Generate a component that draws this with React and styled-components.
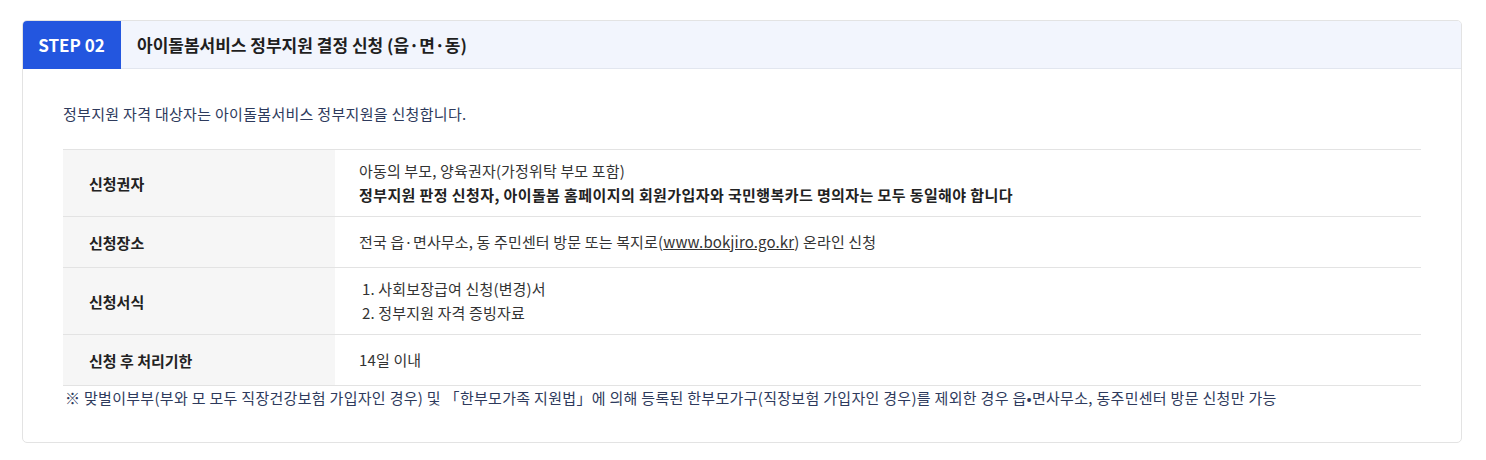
import React from 'react';
import styled, { createGlobalStyle } from 'styled-components';

const GlobalStyle = createGlobalStyle`
  body {
    margin: 0;
    background: #fff;
    font-family: "Noto Sans CJK KR", "Noto Sans", sans-serif;
    color: #333;
  }
`;

const Page = styled.div`
  padding: 20px 24px 17px 22px;
`;

const Card = styled.section`
  border: 1px solid #e3e3e3;
  border-radius: 5px;
  overflow: hidden;
  background: #fff;
`;

const Header = styled.header`
  display: flex;
  align-items: stretch;
  height: 47px;
  background: #f2f5fd;
  border-bottom: 1px solid #e2e6ef;
`;

const StepBadge = styled.div`
  display: flex;
  align-items: center;
  justify-content: center;
  width: 99px;
  margin: -1px 0 -1px -1px;
  background: #2356df;
  color: #fff;
  font-weight: 700;
  font-size: 17px;
`;

const Title = styled.h3`
  margin: 0;
  padding-left: 16px;
  display: flex;
  align-items: center;
  font-size: 17px;
  font-weight: 700;
  color: #1f1f1f;
`;

const Body = styled.div`
  padding: 33px 40px 32px;
`;

const Intro = styled.p`
  margin: 0 0 23px;
  font-size: 15px;
  line-height: 24px;
  color: #2e3a5c;
  letter-spacing: 0.3px;
`;

const Table = styled.div`
  border-top: 1px solid #e3e3e3;
`;

const Row = styled.div`
  display: grid;
  grid-template-columns: 272px 1fr;
  border-bottom: 1px solid #e3e3e3;
`;

const Label = styled.div`
  display: flex;
  align-items: center;
  min-height: 50px;
  padding: 0 26px;
  background: #f6f6f6;
  font-size: 15px;
  font-weight: 700;
  color: #222;
`;

const Value = styled.div`
  display: flex;
  flex-direction: column;
  justify-content: center;
  padding: 9px 24px;
  font-size: 15px;
  line-height: 24px;
  color: #333;
  letter-spacing: 0.15px;
`;

const Strong = styled.strong`
  font-weight: 700;
  color: #222;
  letter-spacing: 0.4px;
`;

const Link = styled.a`
  color: #333;
  text-decoration: underline;
`;

const ListItem = styled.span`
  padding-left: ${(p) => p.$indent || 0}px;
`;

const Note = styled.p`
  margin: 0;
  padding-left: 2px;
  font-size: 15px;
  line-height: 24px;
  color: #2e3a5c;
  letter-spacing: 0.3px;
`;

const rows = [
  {
    label: '신청권자',
    value: (
      <>
        <span>아동의 부모, 양육권자(가정위탁 부모 포함)</span>
        <Strong>
          정부지원 판정 신청자, 아이돌봄 홈페이지의 회원가입자와 국민행복카드 명의자는 모두 동일해야 합니다
        </Strong>
      </>
    ),
  },
  {
    label: '신청장소',
    value: (
      <span>
        전국 읍·면사무소, 동 주민센터 방문 또는 복지로(
        <Link href="#">www.bokjiro.go.kr</Link>) 온라인 신청
      </span>
    ),
  },
  {
    label: '신청서식',
    value: (
      <>
        <ListItem $indent={3}>1. 사회보장급여 신청(변경)서</ListItem>
        <ListItem $indent={3}>2. 정부지원 자격 증빙자료</ListItem>
      </>
    ),
  },
  {
    label: '신청 후 처리기한',
    value: <span>14일 이내</span>,
  },
];

export default function App() {
  return (
    <Page>
      <GlobalStyle />
      <Card>
        <Header>
          <StepBadge>STEP 02</StepBadge>
          <Title>아이돌봄서비스 정부지원 결정 신청 (읍·면·동)</Title>
        </Header>
        <Body>
          <Intro>정부지원 자격 대상자는 아이돌봄서비스 정부지원을 신청합니다.</Intro>
          <Table>
            {rows.map((row) => (
              <Row key={row.label}>
                <Label>{row.label}</Label>
                <Value>{row.value}</Value>
              </Row>
            ))}
          </Table>
          <Note>
            ※ 맞벌이부부(부와 모 모두 직장건강보험 가입자인 경우) 및 「한부모가족 지원법」에 의해 등록된
            한부모가구(직장보험 가입자인 경우)를 제외한 경우 읍•면사무소, 동주민센터 방문 신청만 가능
          </Note>
        </Body>
      </Card>
    </Page>
  );
}
